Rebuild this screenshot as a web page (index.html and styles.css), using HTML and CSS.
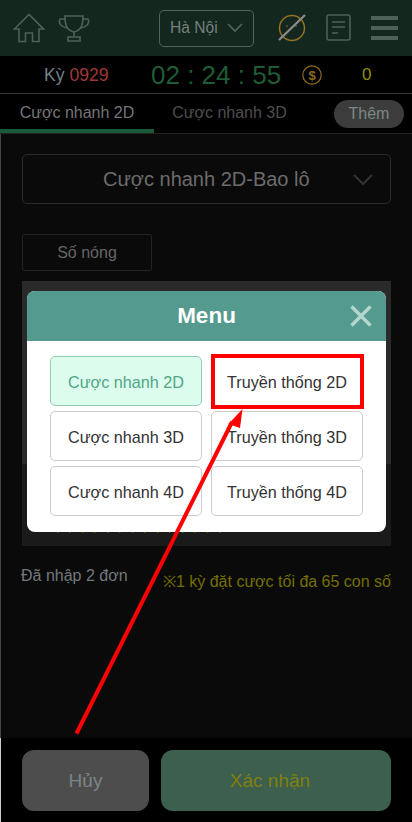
FILE: index.html
```html
<!DOCTYPE html>
<html lang="en">
<head>
    <meta charset="UTF-8">
    <meta name="viewport" content="width=device-width, initial-scale=1.0">
    <title>Cược nhanh 2D</title>
    <link rel="stylesheet" href="styles.css">
</head>
<body>
    <div class="page">
        <header class="top-bar">
            <div class="top-left">
                <svg class="icon-home" width="32" height="30" viewBox="0 0 32 30" fill="none" stroke="#4f605a" stroke-width="1.6">
                    <path d="M1.500 16 L16 1.500 L30.500 16 H26 V28.500 H19.500 V20 H12.500 V28.500 H6 V16 Z"/>
                </svg>
                <svg class="icon-cup" width="32" height="28" viewBox="0 0 32 28" fill="none" stroke="#4f605a" stroke-width="1.6">
                    <path d="M7 2 H25 C25 10 24 16 16 18 C8 16 7 10 7 2 Z"/>
                    <path d="M7 5 H2 C0 9 3 13 9 14 M25 5 H30 C32 9 29 13 23 14"/>
                    <path d="M16 18 V22 M10 23 H22 V27 H10 Z"/>
                </svg>
            </div>
            <div class="city-select">
                <span>Hà Nội</span>
                <svg width="16" height="10" viewBox="0 0 16 10" fill="none" stroke="#55635d" stroke-width="1.6"><path d="M1 1 L8 8 L15 1"/></svg>
            </div>
            <div class="top-right">
                <svg width="30" height="30" viewBox="0 0 30 30" fill="none">
                    <circle cx="15" cy="15" r="12.500" stroke="#96711f" stroke-width="1.500"/>
                    <circle cx="10" cy="13" r="0.800" fill="#96711f"/>
                    <circle cx="19" cy="13" r="0.800" fill="#96711f"/>
                    <path d="M2 27 L28 2" stroke="#8c8c8c" stroke-width="2.200"/>
                </svg>
                <svg width="26" height="28" viewBox="0 0 26 28" fill="none" stroke="#4f605a" stroke-width="1.600">
                    <rect x="1" y="1" width="23" height="25" rx="2"/>
                    <path d="M6 8 H19 M6 13 H19 M6 19 H12"/>
                </svg>
                <div class="burger"><i></i><i></i><i></i></div>
            </div>
        </header>

        <div class="timer-row">
            <div class="period">Kỳ <span>0929</span></div>
            <div class="clock">02 : 24 : 55</div>
            <svg width="20" height="20" viewBox="0 0 20 20" fill="none">
                <circle cx="10" cy="10" r="9.200" stroke="#8a6a1e" stroke-width="1.200"/>
                <text x="10" y="14.500" text-anchor="middle" class="coin">$</text>
            </svg>
            <div class="balance">0</div>
        </div>

        <nav class="tabs">
            <div class="tab active">Cược nhanh 2D</div>
            <div class="tab">Cược nhanh 3D</div>
            <div class="more">Thêm</div>
        </nav>

        <main class="content">
            <div class="play-select">
                <span>Cược nhanh 2D-Bao lô</span>
                <svg width="20" height="12" viewBox="0 0 20 12" fill="none" stroke="#333" stroke-width="2"><path d="M1 1 L10 10 L19 1"/></svg>
            </div>
            <div class="hot-btn">Số nóng</div>
            <div class="panel">
                <div class="panel-note">(0) (1) (2) (3) (4) (5) (6)</div>
            </div>
            <div class="notes">
                <div class="entered">Đã nhập 2 đơn</div>
                <div class="limit">※1 kỳ đặt cược tối đa 65 con số</div>
            </div>
        </main>

        <footer class="bottom-bar">
            <div class="btn-cancel">Hủy</div>
            <div class="btn-ok">Xác nhận</div>
        </footer>

        <div class="modal">
            <div class="modal-head">
                <span>Menu</span>
                <svg class="modal-close" width="22" height="22" viewBox="0 0 22 22" stroke="#b5d6cf" stroke-width="3.400"><path d="M1.500 1.500 L20.500 20.500 M20.500 1.500 L1.500 20.500"/></svg>
            </div>
            <div class="modal-grid">
                <div class="menu-item selected">Cược nhanh 2D</div>
                <div class="menu-item">Truyền thống 2D</div>
                <div class="menu-item">Cược nhanh 3D</div>
                <div class="menu-item">Truyền thống 3D</div>
                <div class="menu-item">Cược nhanh 4D</div>
                <div class="menu-item">Truyền thống 4D</div>
            </div>
        </div>

        <!-- annotation drawn over the screenshot -->
        <div class="red-box"></div>
        <svg class="red-arrow" width="412" height="822" viewBox="0 0 412 822" fill="none">
            <path d="M76.500 733.500 L232 422" stroke="#ff0000" stroke-width="4"/>
            <path d="M242.500 409 L228.500 424 L240 428 Z" fill="#ff0000"/>
        </svg>
    </div>
</body>
</html>
```

FILE: styles.css
```css
* {
    box-sizing: border-box;
}

body {
    margin: 0;
    font-family: "Liberation Sans", Arial, sans-serif;
    background-color: #0a0a0a;
}

.page {
    position: relative;
    width: 412px;
    height: 822px;
    overflow: hidden;
    display: flex;
    flex-direction: column;
}

.top-bar {
    height: 56px;
    flex-shrink: 0;
    background-color: #13271f;
    display: flex;
    align-items: center;
    padding: 0 14px 0 13px;
}

.top-left {
    display: flex;
    align-items: center;
    gap: 13px;
    width: 146px;
}

.city-select {
    width: 95px;
    height: 37px;
    border: 1px solid #55635d;
    border-radius: 5px;
    display: flex;
    align-items: center;
    gap: 9px;
    padding-left: 10px;
    color: #76817d;
    font-size: 15.6px;
}

.top-right {
    margin-left: auto;
    display: flex;
    align-items: center;
    gap: 19px;
}

.burger {
    width: 27px;
    display: flex;
    flex-direction: column;
    gap: 6px;
}

.burger i {
    display: block;
    height: 4px;
    background-color: #4f605a;
}

.timer-row {
    height: 38px;
    flex-shrink: 0;
    background-color: #000;
    display: flex;
    align-items: center;
    border-bottom: 1px solid #333;
}

.period {
    width: 151px;
    padding: 1px 0 0 44px;
    font-size: 17.6px;
    color: #72808a;
}

.period span {
    color: #a03838;
}

.clock {
    width: 151px;
    font-size: 26px;
    line-height: 36px;
    color: #1e5c36;
    white-space: nowrap;
}

.coin {
    font-family: "Liberation Sans", Arial, sans-serif;
    font-size: 13px;
    font-weight: bold;
    fill: #8a6a1e;
}

.balance {
    margin-left: 40px;
    font-size: 17px;
    color: #8f8f00;
}

.tabs {
    height: 40px;
    flex-shrink: 0;
    background-color: #000;
    display: flex;
    align-items: center;
    border-bottom: 1px solid #222;
    font-size: 16px;
}

.tab {
    width: 154px;
    height: 39px;
    line-height: 38px;
    text-align: center;
    color: #4e4e4e;
}

.tab.active {
    color: #757575;
    border-bottom: 4px solid #1a5a3a;
}

.tab + .tab {
    width: 150px;
    padding-left: 1px;
}

.more {
    width: 70px;
    height: 28px;
    margin-left: 30px;
    border-radius: 14px;
    background-color: #3c3c3c;
    color: #7c8888;
    text-align: center;
    line-height: 28px;
}

.content {
    flex: 1;
    background-color: #0a0a0a;
    box-shadow: inset 1px 0 0 #444;
    padding: 20px 21px 0 22px;
}

.play-select {
    height: 50px;
    border: 1px solid #2a2a2a;
    border-radius: 5px;
    display: flex;
    align-items: center;
    justify-content: space-between;
    padding: 1px 17px 0 80px;
    color: #6c6c6c;
    font-size: 20px;
}

.play-select svg {
    margin-top: 1px;
}

.hot-btn {
    width: 130px;
    height: 37px;
    margin-top: 30px;
    border: 1px solid #222;
    border-radius: 2px;
    text-align: center;
    line-height: 35px;
    color: #666;
    font-size: 16px;
}

.panel {
    height: 265px;
    margin-top: 10px;
    background: linear-gradient(#2a2a2a 0, #2a2a2a 183px, #1a1a1a 183px);
    position: relative;
}

.panel-note {
    position: absolute;
    left: 32px;
    top: 236px;
    color: #6a5c0e;
    font-size: 14px;
    white-space: nowrap;
    letter-spacing: 1px;
}

.notes {
    display: flex;
    justify-content: space-between;
    margin-top: 21px;
    margin-left: -1px;
    font-size: 16px;
}

.entered {
    color: #72787c;
}

.limit {
    margin-top: 3px;
    color: #766e00;
}

.bottom-bar {
    height: 84px;
    flex-shrink: 0;
    background-color: #000;
    box-shadow: inset 1px 0 0 #ccc;
    display: flex;
    gap: 12px;
    padding: 12px 21px 11px 22px;
    font-size: 19px;
}

.btn-cancel,
.btn-ok {
    border-radius: 12px;
    display: flex;
    align-items: center;
    justify-content: center;
}

.btn-cancel {
    width: 127px;
    background-color: #4d4d4d;
    color: #7c8488;
}

.btn-ok {
    flex: 1;
    background-color: #3c5f4e;
    color: #80800f;
    padding-right: 12px;
}

.modal {
    position: absolute;
    left: 27px;
    top: 291px;
    width: 359px;
    height: 241px;
    background-color: #fff;
    border-radius: 8px;
    overflow: hidden;
}

.modal-head {
    height: 50px;
    background-color: #549a8e;
    color: #fff;
    display: flex;
    align-items: center;
    justify-content: center;
    font-size: 22.5px;
    font-weight: bold;
    position: relative;
}

.modal-close {
    position: absolute;
    right: 14px;
    top: 14px;
}

.modal-grid {
    display: grid;
    grid-template-columns: 152px 152px;
    grid-auto-rows: 50px;
    gap: 5px 9px;
    padding: 15px 0 0 23px;
}

.menu-item {
    border: 1px solid #ccc;
    border-radius: 5px;
    display: flex;
    align-items: center;
    justify-content: center;
    padding-top: 3px;
    font-size: 16.2px;
    color: #333;
}

.menu-item.selected {
    background-color: #dcfcee;
    border-color: #93cdb5;
    color: #52a684;
}

.red-box {
    position: absolute;
    left: 211px;
    top: 354px;
    width: 153px;
    height: 55px;
    border: 4px solid #f00;
}

.red-arrow {
    position: absolute;
    left: 0;
    top: 0;
    pointer-events: none;
}
```
